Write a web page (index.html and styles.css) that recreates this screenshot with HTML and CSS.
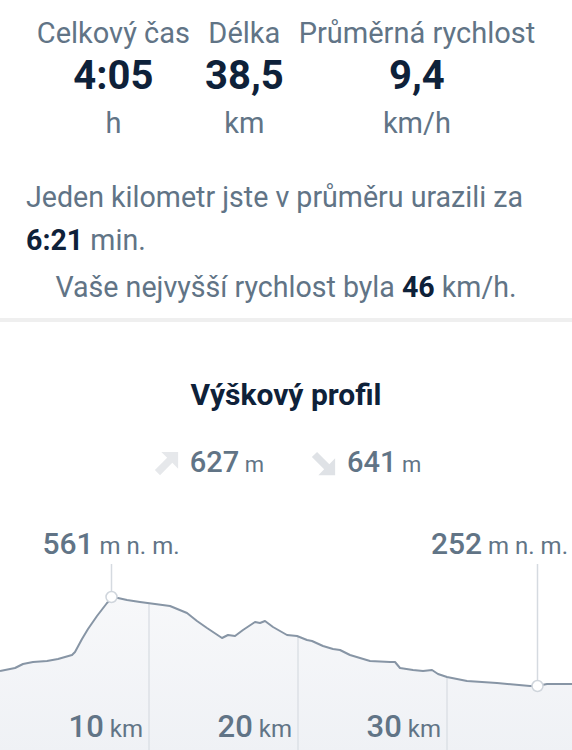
FILE: index.html
```html
<!DOCTYPE html>
<html lang="cs">
<head>
  <meta charset="UTF-8">
  <meta name="viewport" content="width=device-width, initial-scale=1.0">
  <title>Souhrn trasy</title>
  <link rel="stylesheet" href="styles.css">
</head>
<body>
  <!-- Main stats -->
  <div class="stats">
    <div class="stat">
      <span class="stat-label">Celkový čas</span>
      <span class="stat-value">4:05</span>
      <span class="stat-unit">h</span>
    </div>
    <div class="stat">
      <span class="stat-label">Délka</span>
      <span class="stat-value">38,5</span>
      <span class="stat-unit">km</span>
    </div>
    <div class="stat">
      <span class="stat-label">Průměrná rychlost</span>
      <span class="stat-value">9,4</span>
      <span class="stat-unit">km/h</span>
    </div>
  </div>

  <div class="summary">
    <p class="pace">Jeden kilometr jste v průměru urazili za <b>6:21</b> min.</p>
    <p class="top-speed">Vaše nejvyšší rychlost byla <b>46</b> km/h.</p>
  </div>

  <!-- Elevation profile -->
  <div class="profile">
    <h2>Výškový profil</h2>
    <div class="climb">
      <span class="climb-item">
        <svg class="arrow up" viewBox="0 0 24 24"><path d="M8 3H21V16L16.5 11.5L7 21L3 17L12.5 7.5Z"/></svg>
        <span><b>627</b> m</span>
      </span>
      <span class="climb-item">
        <svg class="arrow down" viewBox="0 0 24 24"><path d="M8 21H21V8L16.5 12.5L7 3L3 7L12.5 16.5Z"/></svg>
        <span><b>641</b> m</span>
      </span>
    </div>

    <div class="chart">
      <span class="peak-label left"><b>561</b> m n. m.</span>
      <span class="peak-label right"><b>252</b> m n. m.</span>
      <svg class="chart-svg" viewBox="0 0 572 230" width="572" height="230">
        <defs>
          <linearGradient id="fill" x1="0" y1="0" x2="0" y2="1">
            <stop offset="0" stop-color="#f7f8fa"/>
            <stop offset="1" stop-color="#eff1f5"/>
          </linearGradient>
        </defs>
        <path class="area" d="M0 148 L15 145 L23 141 L33 139 L47 138 L58 136 L72 132 L75 129 L82 116 L88 106 L97 93 L107 80 L112 75 L118 75 L127 77 L140 79 L155 81 L170 83 L187 90 L197 98 L207 105 L222 115 L228 112 L235 113 L243 107 L255 99 L260 100 L265 98 L273 104 L287 112 L297 113 L307 117 L312 118 L323 123 L333 126 L340 127 L350 132 L370 138 L390 139 L395 139 L400 145 L413 147 L423 148 L432 147 L438 151 L447 154 L467 158 L497 160 L530 163 L537 163 L547 161 L560 161 L572 161 L572 230 L0 230 Z"/>
        <line class="grid" x1="149" y1="80" x2="149" y2="230"/>
        <line class="grid" x1="298" y1="113" x2="298" y2="230"/>
        <line class="grid" x1="447" y1="154" x2="447" y2="230"/>
        <path class="profile-line" d="M0 148 L15 145 L23 141 L33 139 L47 138 L58 136 L72 132 L75 129 L82 116 L88 106 L97 93 L107 80 L112 75 L118 75 L127 77 L140 79 L155 81 L170 83 L187 90 L197 98 L207 105 L222 115 L228 112 L235 113 L243 107 L255 99 L260 100 L265 98 L273 104 L287 112 L297 113 L307 117 L312 118 L323 123 L333 126 L340 127 L350 132 L370 138 L390 139 L395 139 L400 145 L413 147 L423 148 L432 147 L438 151 L447 154 L467 158 L497 160 L530 163 L537 163 L547 161 L560 161 L572 161"/>
        <line class="marker" x1="111.5" y1="41" x2="111.5" y2="68"/>
        <circle class="marker-dot" cx="111.5" cy="74" r="5.5"/>
        <line class="marker" x1="537.5" y1="41" x2="537.5" y2="157"/>
        <circle class="marker-dot" cx="537.5" cy="163" r="5.5"/>
        <text class="axis" x="143" y="214" text-anchor="end"><tspan class="axis-num">10</tspan> km</text>
        <text class="axis" x="292" y="214" text-anchor="end"><tspan class="axis-num">20</tspan> km</text>
        <text class="axis" x="441" y="214" text-anchor="end"><tspan class="axis-num">30</tspan> km</text>
      </svg>
    </div>
  </div>
</body>
</html>
```

FILE: styles.css
```css
body {
  margin: 0;
  background-color: white;
  color: #617486;
  font-family: Roboto, "Noto Sans", sans-serif;
  width: 572px;
  height: 750px;
  overflow: hidden;
}

b {
  color: #0e2139;
  font-weight: 700;
}

/* Top stats row */
.stats {
  display: flex;
  justify-content: center;
  gap: 15px;
  padding-top: 14px;
}

.stat {
  display: flex;
  flex-direction: column;
  align-items: center;
}

.stat-label {
  font-size: 29px;
  line-height: 38px;
}

.stat-value {
  font-size: 40px;
  font-weight: 700;
  line-height: 48px;
  color: #0e2139;
}

.stat-unit {
  font-size: 29px;
  line-height: 46px;
}

/* Summary text */
.summary {
  padding: 0 26px;
  margin-top: 30px;
  border-bottom: 4px solid #efefef;
  padding-bottom: 9px;
}

.summary p {
  margin: 0;
  font-size: 28.6px;
  line-height: 43px;
}

.summary .top-speed {
  text-align: center;
  margin-top: 4px;
}

/* Elevation profile */
.profile h2 {
  margin: 53px 0 0;
  font-size: 30px;
  line-height: 40px;
  font-weight: 700;
  text-align: center;
  color: #0e2139;
}

.climb {
  display: flex;
  justify-content: center;
  gap: 44px;
  margin-top: 27px;
  font-size: 22px;
  line-height: 40px;
}

.climb-item {
  display: flex;
  align-items: center;
  gap: 8px;
}

.climb-item b {
  font-size: 29px;
  font-weight: 500;
  color: #617486;
}

.arrow {
  width: 31px;
  height: 31px;
}

.arrow.up {
  fill: #e6e8eb;
}

.arrow.down {
  fill: #dfe2e6;
}

.chart {
  position: relative;
  margin-top: 38px;
  height: 230px;
}

.chart-svg {
  display: block;
}

.peak-label {
  position: absolute;
  top: 4px;
  font-size: 24px;
  line-height: 34px;
  white-space: nowrap;
}

.peak-label b {
  font-size: 30px;
  font-weight: 500;
  color: #617486;
}

.peak-label.left {
  left: 111px;
  transform: translateX(-50%);
}

.peak-label.right {
  right: 4px;
}

.area {
  fill: url(#fill);
}

.profile-line {
  fill: none;
  stroke: #8795a5;
  stroke-width: 2;
  stroke-linejoin: round;
}

.grid {
  stroke: #dde1e6;
  stroke-width: 1.5;
}

.marker {
  stroke: #d5dae0;
  stroke-width: 1.5;
}

.marker-dot {
  fill: white;
  stroke: #cfd5dc;
  stroke-width: 1.5;
}

.axis {
  font-family: Roboto, sans-serif;
  font-size: 24px;
  fill: #617486;
}

.axis-num {
  font-size: 31px;
  font-weight: 500;
}
```
